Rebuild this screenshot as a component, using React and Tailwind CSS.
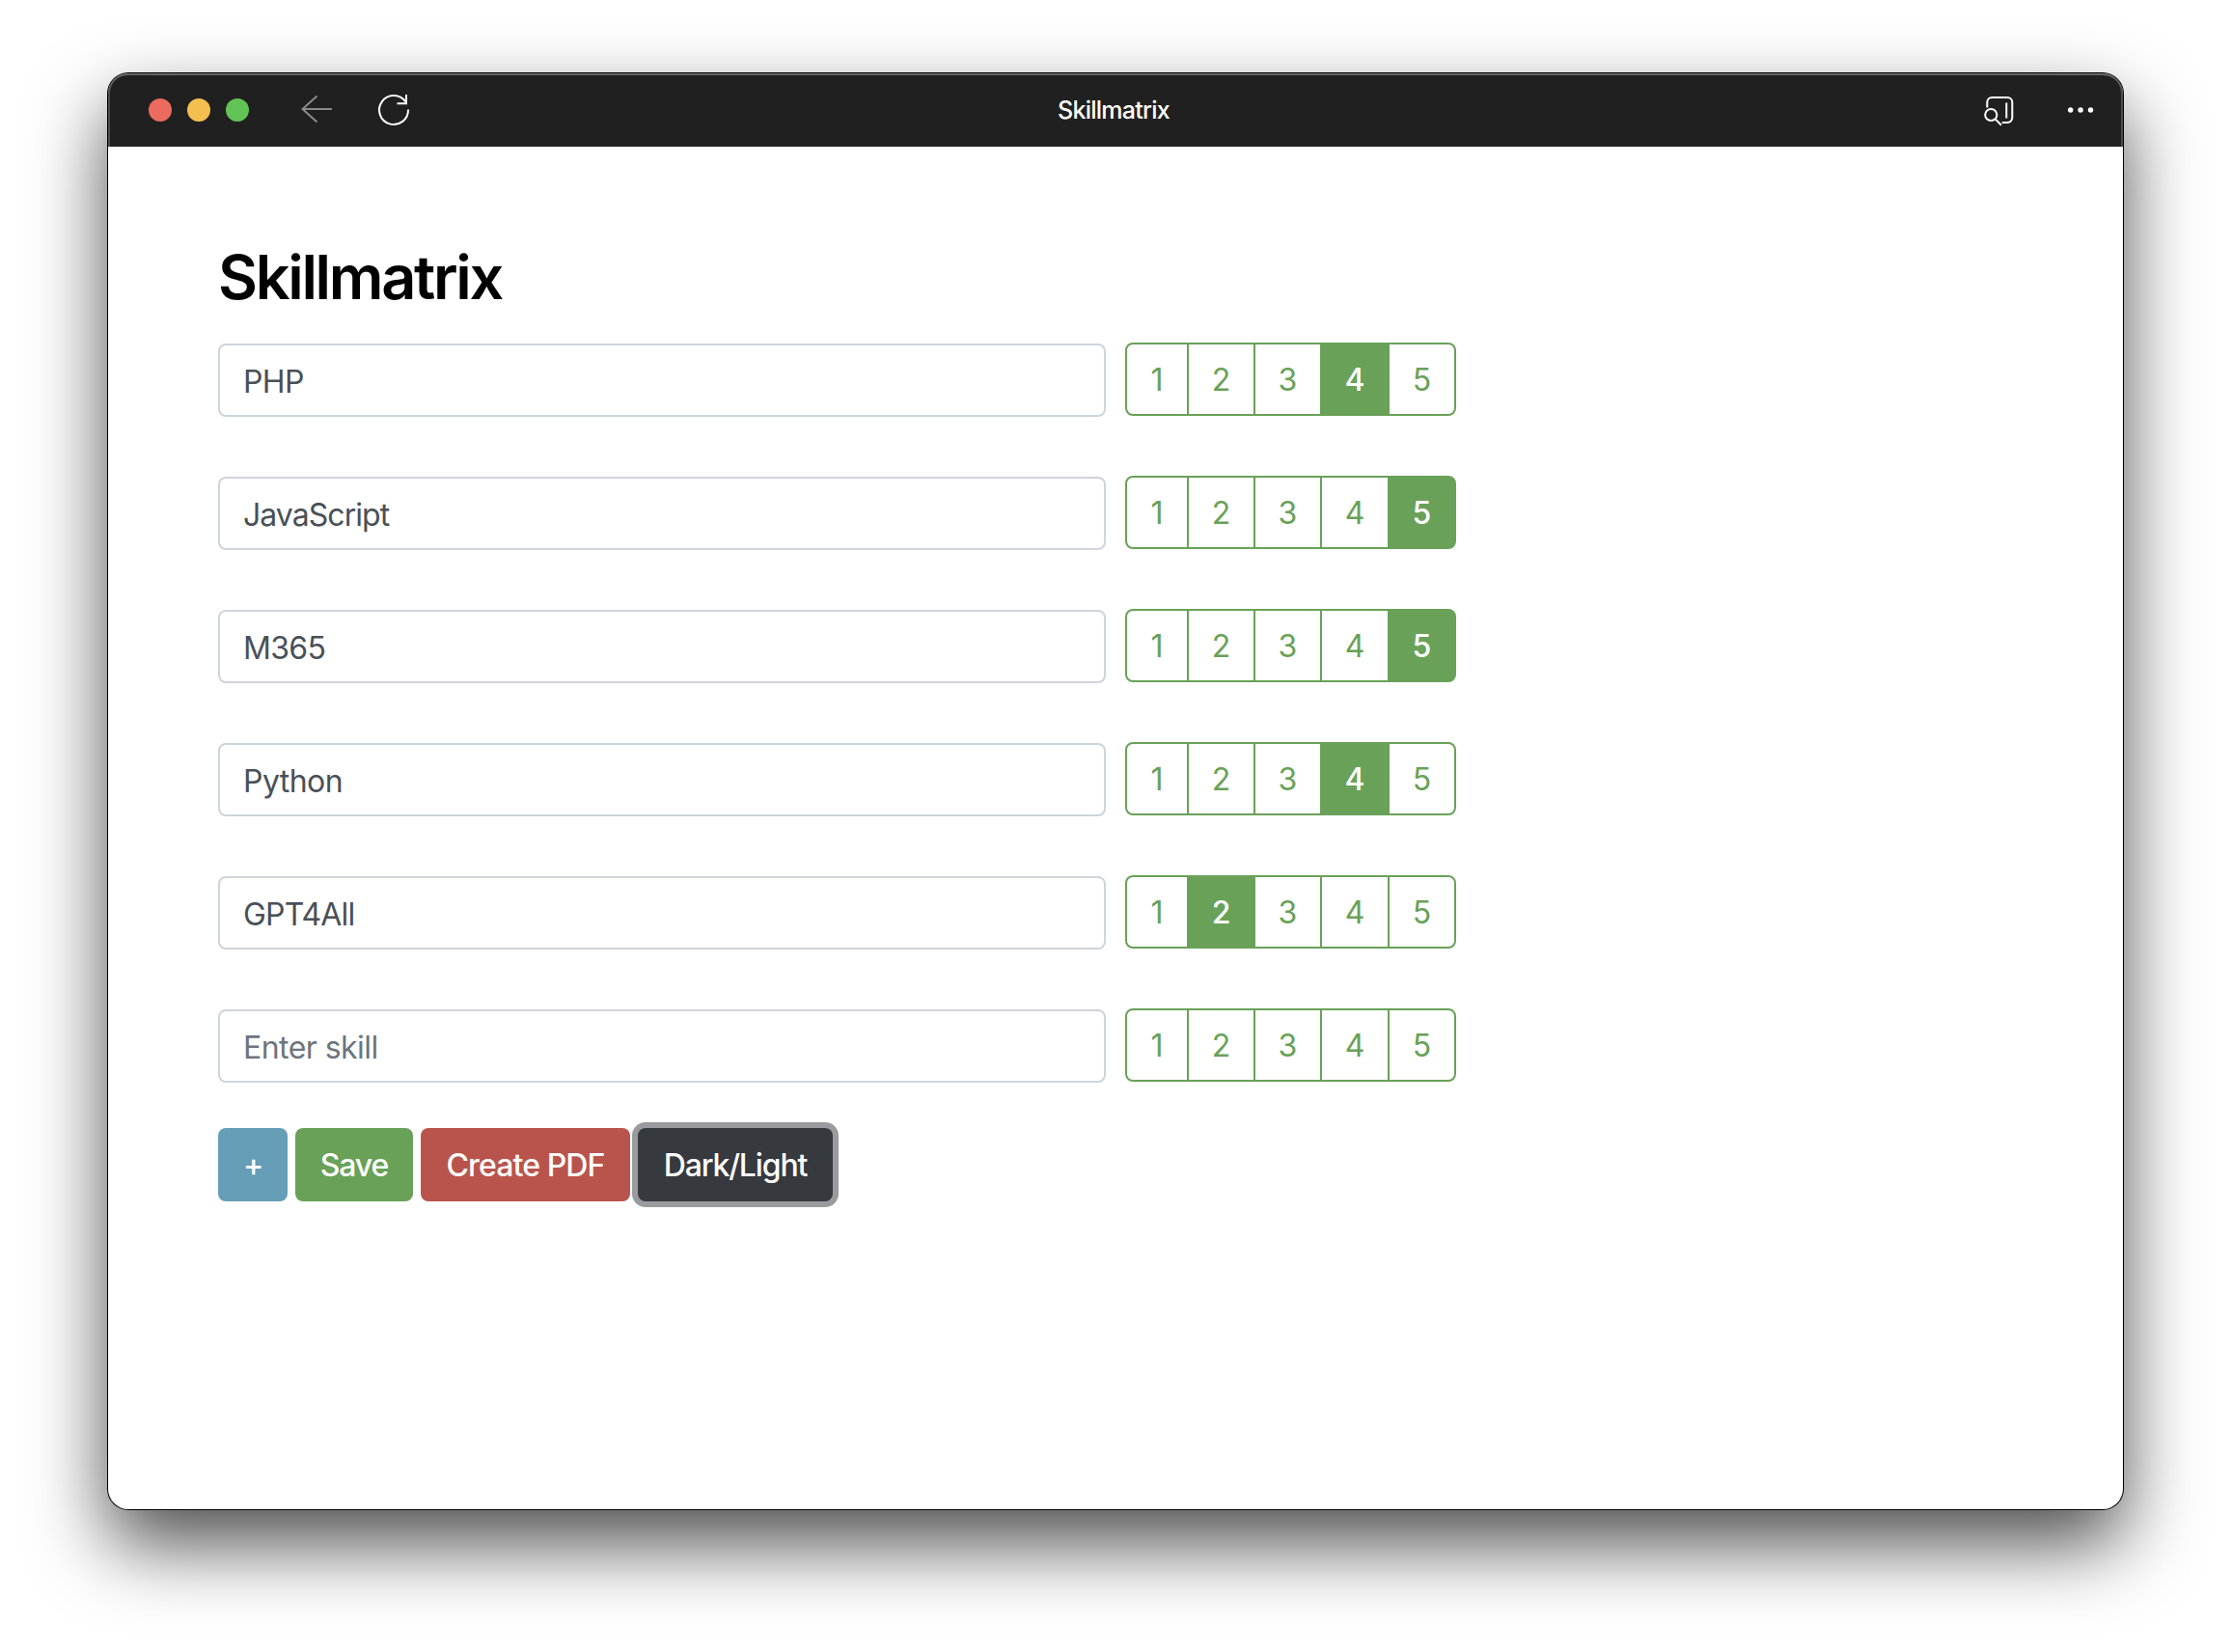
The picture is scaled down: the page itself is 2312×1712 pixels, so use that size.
const SKILLS = [
  { name: "PHP", level: 4, tracking: "tracking-[-0.6px]" },
  { name: "JavaScript", level: 5, tracking: "tracking-[-0.95px]" },
  { name: "M365", level: 5, tracking: "tracking-[-0.7px]" },
  { name: "Python", level: 4, tracking: "tracking-[-0.55px]" },
  { name: "GPT4All", level: 2, tracking: "tracking-[-0.8px]" },
  { name: "", level: 0, tracking: "tracking-[-0.55px]" },
];

const CELLS = [
  { value: 1, shape: "w-[66px] rounded-l-[8px]" },
  { value: 2, shape: "-ml-[2px] w-[71px]" },
  { value: 3, shape: "-ml-[2px] w-[71px]" },
  { value: 4, shape: "-ml-[2px] w-[72px]" },
  { value: 5, shape: "-ml-[2px] w-[71px] rounded-r-[8px]" },
];

function TitleBar() {
  return (
    <header className="grid h-[76px] grid-cols-[1fr_auto_1fr] items-center rounded-t-[21px] bg-[#202020] shadow-[inset_0_2px_0_#666666,inset_2px_0_0_#4c4c4c,inset_-2px_0_0_#4c4c4c]">
      <div className="flex items-center pl-[42px]">
        <span className="h-[24px] w-[24px] rounded-full bg-[#ec6b5e]" />
        <span className="ml-[16px] h-[24px] w-[24px] rounded-full bg-[#f4bf4f]" />
        <span className="ml-[16px] h-[24px] w-[24px] rounded-full bg-[#61c454]" />
        <svg className="ml-[52px] h-[36px] w-[36px]" viewBox="0 0 36 36" fill="none" stroke="#8a8a8a" strokeWidth="2">
          <path d="M34 17H3.500M18.500 3.500L3.500 17l15 13.500" />
        </svg>
        <svg className="ml-[44px] h-[36px] w-[36px]" viewBox="0 0 36 36" fill="none" stroke="#ffffff" strokeWidth="2">
          <path d="M33 17.5A15 15 0 1 1 30.2 9.3M31 2v9.3h-9.5" />
        </svg>
      </div>
      <span className="pr-[4px] text-[25px] leading-[32px] font-medium tracking-[-0.75px] text-white">Skillmatrix</span>
      <div className="flex items-center justify-end pr-[29px]">
        <svg className="h-[36px] w-[36px]" viewBox="0 0 36 36" fill="none" stroke="#ffffff" strokeWidth="2">
          <path d="M5.300 15.500V10a5 5 0 0 1 5-5h16a5 5 0 0 1 5 5v16a5 5 0 0 1-5 5h-5.500M25.300 10.500v16" />
          <circle cx="9.300" cy="23" r="6.100" />
          <path d="M13.700 27.400L20 33.700" />
        </svg>
        <svg className="ml-[51px] h-[36px] w-[30px]" viewBox="0 0 30 36" fill="#ffffff">
          <circle cx="4.700" cy="18" r="2.700" />
          <circle cx="15.100" cy="18" r="2.700" />
          <circle cx="25.500" cy="18" r="2.700" />
        </svg>
      </div>
    </header>
  );
}

function Rating({ level }) {
  return (
    <div className="-mt-[1px] flex">
      {CELLS.map(({ value, shape }) => (
        <button
          key={value}
          className={`${shape} h-[76px] border-2 border-[#69a158] pt-[2px] text-[32px] leading-[48px] ${
            value === level ? "bg-[#69a158] font-medium text-white" : "font-normal text-[#69a158]"
          }`}
        >
          {value}
        </button>
      ))}
    </div>
  );
}

export default function App() {
  return (
    <div className="h-[1712px] w-[2312px] overflow-hidden bg-white pt-[76px] pl-[112px] font-[Inter,sans-serif]">
      <div className="h-[1488px] w-[2088px] rounded-[21px] bg-white shadow-[0_0_0_1px_#000,0_36px_80px_rgba(0,0,0,0.7)]">
        <TitleBar />
        <main className="flex flex-col items-start px-[114px] pt-[96px]">
          <h1 className="h-[77px] text-[63px] leading-[78px] font-semibold tracking-[-2.3px] text-black">Skillmatrix</h1>
          <div className="mt-[31px] flex flex-col gap-[62px]">
            {SKILLS.map(({ name, level, tracking }) => (
              <div key={name} className="flex gap-[20px]">
                <input
                  className={`${tracking} h-[76px] w-[920px] rounded-[8px] border-2 border-[#ced4da] px-[24px] pt-[2px] text-[32px] font-normal text-[#495057] placeholder:text-[#6c757d] placeholder:opacity-100`}
                  defaultValue={name}
                  placeholder="Enter skill"
                />
                <Rating level={level} />
              </div>
            ))}
          </div>
          <div className="mt-[47px] flex gap-[8px] text-[32px] leading-[48px] font-medium tracking-[-1.15px] text-white">
            <button className="h-[76px] w-[72px] rounded-[8px] bg-[#669db7] pt-[2px]">+</button>
            <button className="h-[76px] w-[122px] rounded-[8px] bg-[#69a158] pt-[2px]">Save</button>
            <button className="h-[76px] w-[217px] rounded-[8px] bg-[#b9544d] pt-[2px] tracking-[-0.9px]">Create PDF</button>
            <button className="h-[76px] w-[202px] rounded-[8px] bg-[#36393e] pt-[2px] shadow-[0_0_0_6px_#9a9b9f]">Dark/Light</button>
          </div>
        </main>
      </div>
    </div>
  );
}
